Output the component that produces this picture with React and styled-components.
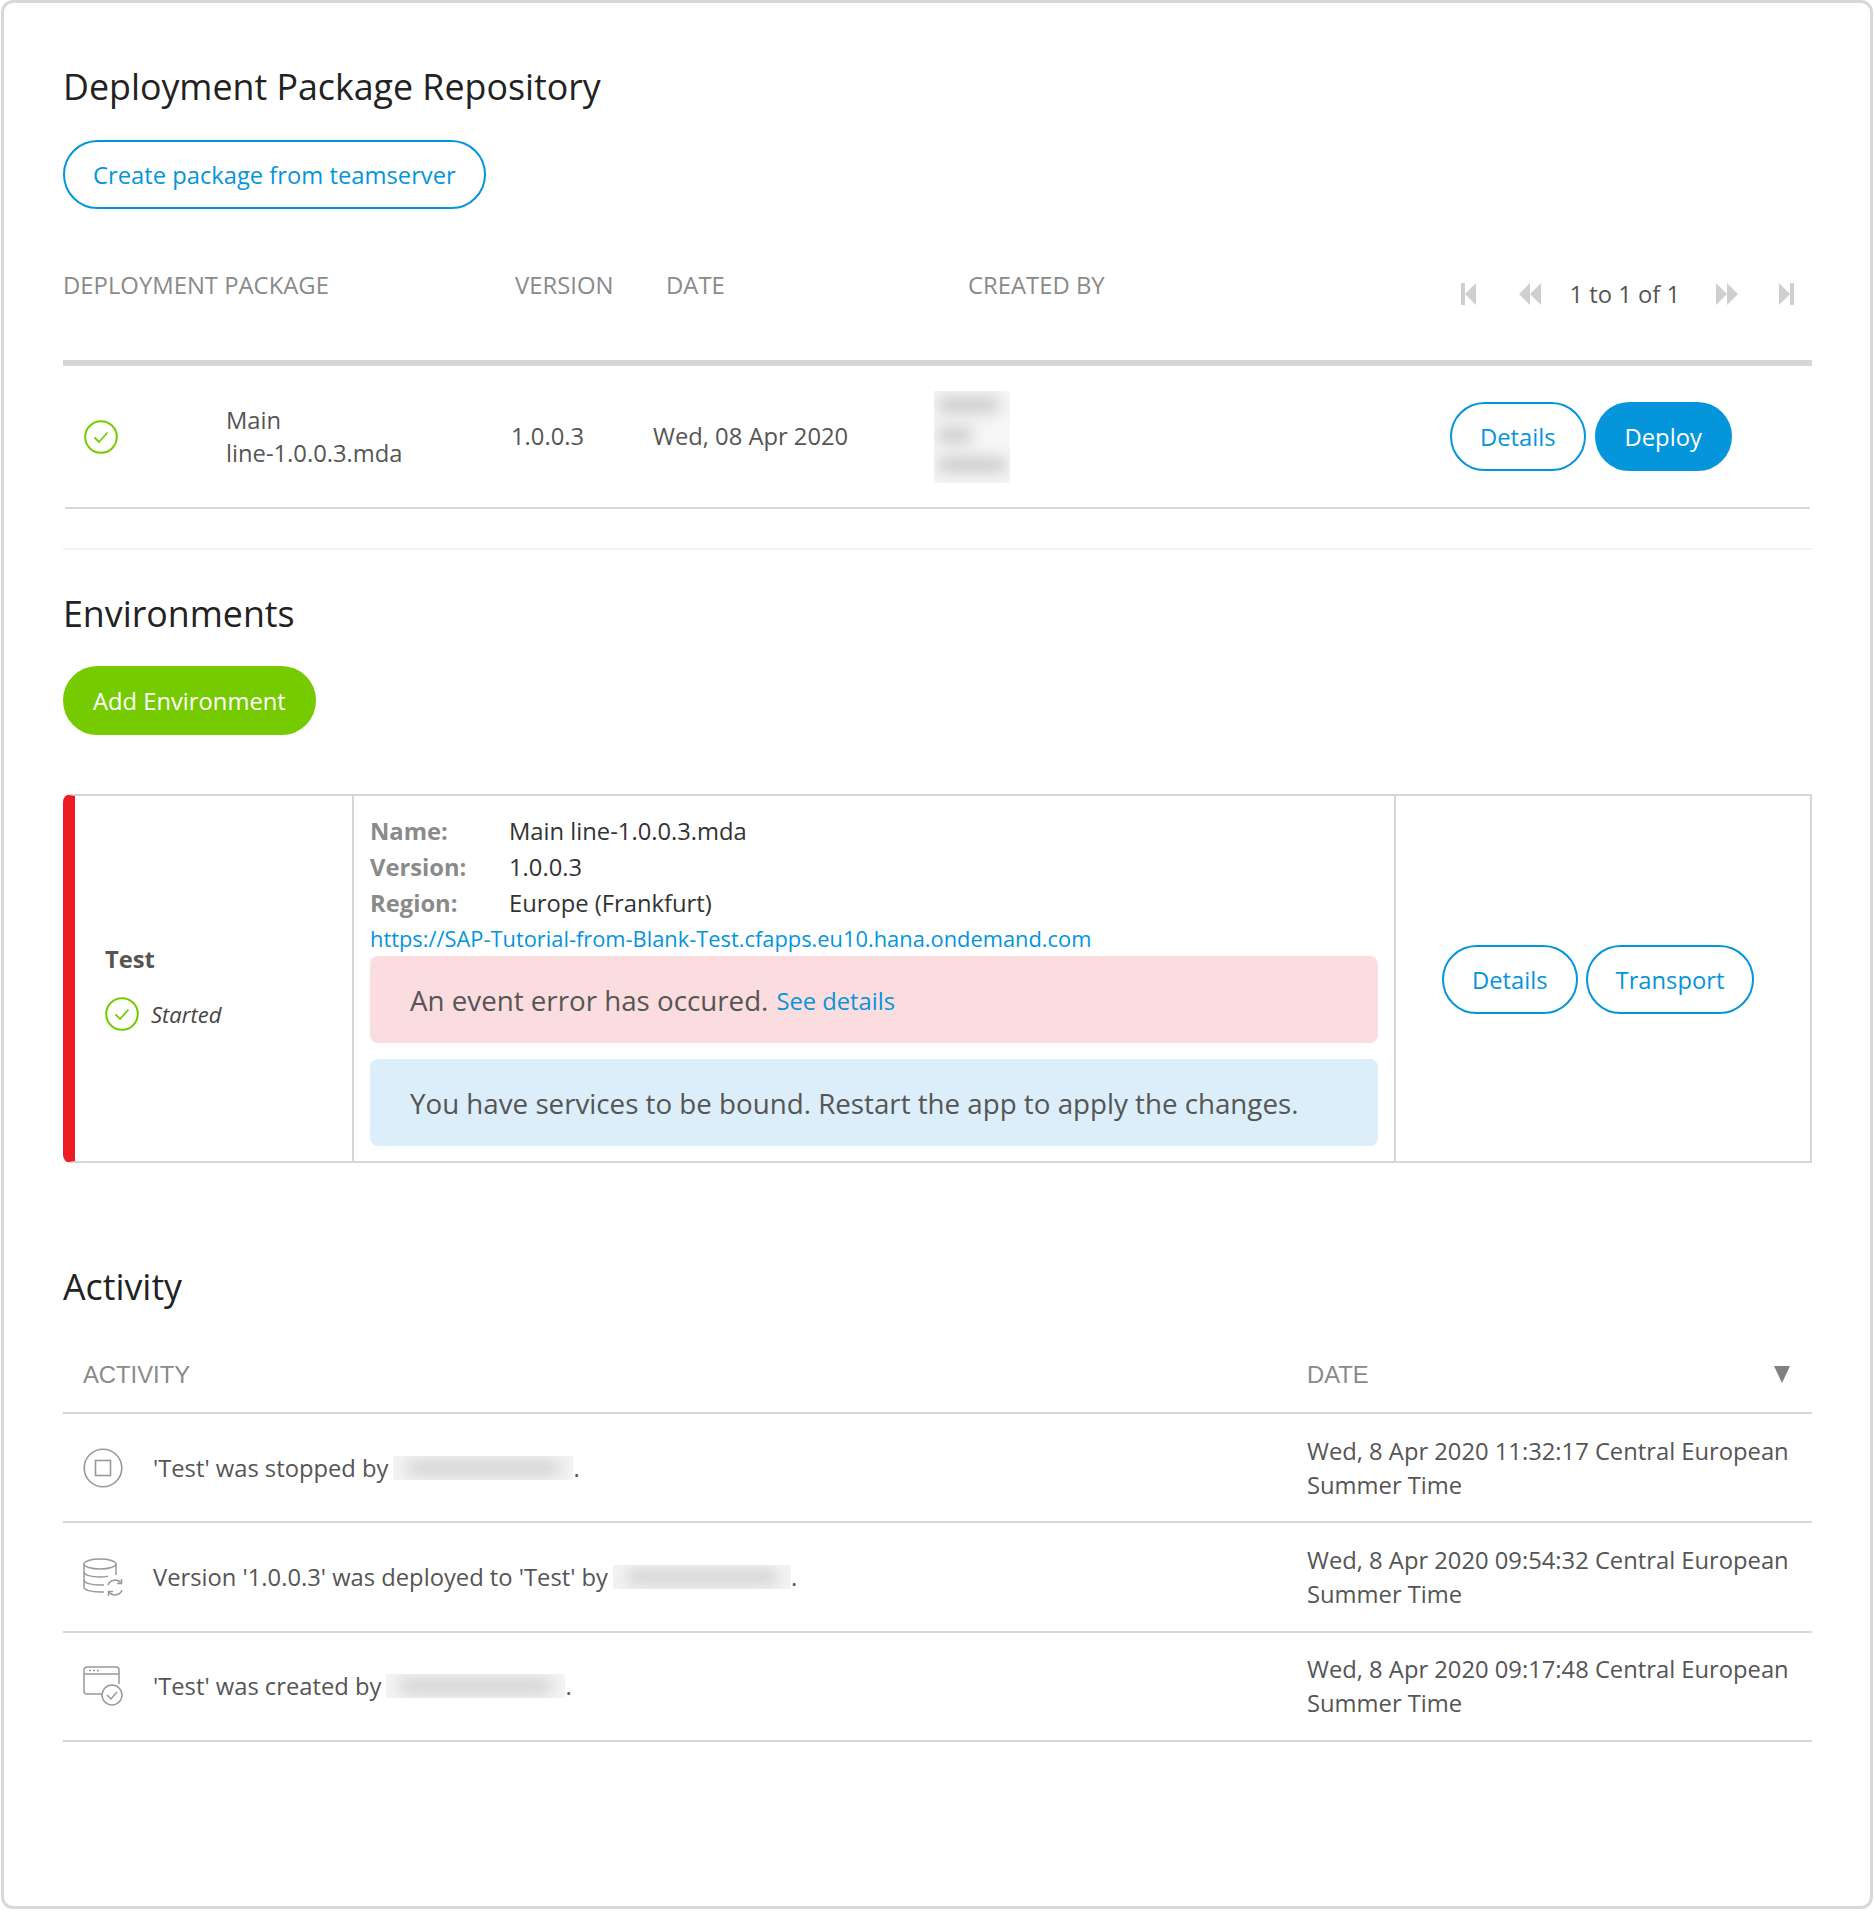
import React from 'react';
import styled, { createGlobalStyle } from 'styled-components';

const GlobalStyle = createGlobalStyle`
  html, body {
    margin: 0;
    padding: 0;
    background: #fff;
  }
  * { box-sizing: border-box; }
  body {
    font-family: "Open Sans", sans-serif;
    color: #555;
  }
`;

const Frame = styled.div`
  width: 1872px;
  height: 1909px;
  margin: 0 0 0 1px;
  border: 3px solid #d8d8d8;
  border-radius: 12px;
  padding: 0 58px 0 59px;
  background: #fff;
`;

const Heading = styled.h2`
  margin: 0;
  font-size: 35.75px;
  line-height: 48px;
  font-weight: 400;
  color: #222;
`;

const PageHeading = styled(Heading)`
  padding-top: 59px;
`;

const Pill = styled.button`
  height: 69px;
  padding: 0 28px;
  border-radius: 35px;
  border: 2px solid ${({ $fill }) => $fill || '#0595db'};
  background: ${({ $fill }) => $fill || '#fff'};
  color: ${({ $fill }) => ($fill ? '#fff' : '#0595db')};
  font: 400 23.75px "Open Sans", sans-serif;
  white-space: nowrap;
`;

const TopAction = styled.div`
  margin-top: ${({ $mt }) => $mt}px;
`;

const PackageHead = styled.div`
  display: grid;
  grid-template-columns: 452px 151px 302px 200px 1fr;
  height: 157px;
  padding-top: 60px;
  border-bottom: 6px solid #d6d6d6;
`;

const HeadCell = styled.div`
  font-size: 23.85px;
  line-height: 33px;
  color: #8a8a8a;
`;

const Pager = styled.div`
  display: flex;
  align-items: center;
  justify-content: flex-end;
  height: 33px;
  margin-top: 8px;
  padding-right: 18px;
  font-size: 23.75px;
  color: #555;
`;

const PagerIcon = styled.svg`
  display: block;
  margin: ${({ $m }) => $m};
  fill: #cfcfcf;
`;

const PackageRow = styled.div`
  display: grid;
  grid-template-columns: 161px 285px 142px 281px 516px 1fr;
  align-items: center;
  height: 143px;
  margin: 0 2px;
  border-bottom: 2px solid #d8d8d8;
  font-size: 23.75px;
  line-height: 33px;
`;

const CheckCell = styled.div`
  padding-left: 19px;
`;

const Blur = styled.div`
  width: ${({ $w }) => $w}px;
  height: ${({ $h }) => $h}px;
  overflow: hidden;
  background: #f7f7f7;
`;

const BlurBar = styled.div`
  height: 14px;
  width: ${({ $w }) => $w}%;
  margin: ${({ $m }) => $m};
  background: #c4c4c4;
  filter: blur(8px);
`;

const BlurInline = styled(Blur)`
  flex: none;
  margin-left: 5px;
  background: #f4f4f4;
`;

const InlineBar = styled.div`
  height: 12px;
  margin: 6px 14px;
  background: #c8c8c8;
  filter: blur(8px);
`;

const Actions = styled.div`
  display: flex;
  gap: ${({ $gap }) => $gap}px;
`;

const SoftRule = styled.div`
  height: 2px;
  margin-top: 39px;
  background: #f1f1f1;
`;

const SectionHeading = styled(Heading)`
  margin-top: ${({ $mt }) => $mt}px;
`;

const EnvCard = styled.div`
  display: grid;
  grid-template-columns: 279px 1042px 1fr;
  height: 369px;
  margin-top: 59px;
  border: 2px solid #d6d6d6;
  border-left: 12px solid #ed1c24;
  border-radius: 8px 0 0 8px;
`;

const EnvName = styled.div`
  display: flex;
  flex-direction: column;
  justify-content: center;
  gap: 21px;
  padding: 16px 0 0 30px;
  border-right: 2px solid #d6d6d6;
`;

const EnvTitle = styled.div`
  font-size: 23.75px;
  line-height: 33px;
  font-weight: 700;
  color: #555;
`;

const EnvStatus = styled.div`
  display: flex;
  align-items: center;
  gap: 12px;
  font-size: 22px;
  font-style: italic;
  color: #444;
`;

const EnvInfo = styled.div`
  padding: 17px 16px 0;
  border-right: 2px solid #d6d6d6;
`;

const InfoRow = styled.div`
  display: flex;
  height: 36px;
  font-size: 23.75px;
  line-height: 36px;
  color: #333;
`;

const InfoLabel = styled.div`
  width: 139px;
  font-weight: 700;
  color: #8a8a8a;
`;

const Link = styled.a`
  color: #0595db;
  text-decoration: none;
`;

const SmallLink = styled(Link)`
  font-size: 23.75px;
  padding-top: 2px;
`;

const UrlRow = styled.div`
  height: 35px;
  font-size: 21.85px;
  line-height: 36px;
`;

const Alert = styled.div`
  display: flex;
  align-items: center;
  gap: 8px;
  height: 87px;
  margin-top: ${({ $mt }) => $mt}px;
  padding-left: 40px;
  border-radius: 8px;
  background: ${({ $bg }) => $bg};
  font-size: 27.73px;
  color: #555;
`;

const EnvActions = styled(Actions)`
  align-items: center;
  padding: 2px 0 0 46px;
`;

const ActivityHead = styled.div`
  display: grid;
  grid-template-columns: 1243px 1fr;
  align-items: center;
  height: 77px;
  margin-top: 27px;
  border-bottom: 2px solid #d8d8d8;
  font-family: "Liberation Sans", Arial, sans-serif;
  font-size: 23.8px;
  color: #8a8a8a;
`;

const HeadLabel = styled.div`
  padding-left: 20px;
`;

const DateHead = styled.div`
  display: flex;
  align-items: center;
  justify-content: space-between;
  padding: 0 22px 0 1px;
`;

const SortArrow = styled.div`
  width: 0;
  height: 0;
  border-left: 8px solid transparent;
  border-right: 8px solid transparent;
  border-top: 17px solid #808080;
`;

const ActivityRow = styled.div`
  display: grid;
  grid-template-columns: 1244px 1fr;
  align-items: center;
  height: 109.3px;
  border-bottom: 2px solid #d8d8d8;
  font-size: 23.75px;
  line-height: 34px;
`;

const ActivityText = styled.div`
  display: flex;
  align-items: center;
  padding-left: 20px;
`;

const IconSlot = styled.div`
  width: 70px;
  flex: none;
`;

const Msg = styled.div`
  white-space: nowrap;
`;

const CheckIcon = ({ size = 34 }) => (
  <svg width={size} height={size} viewBox="0 0 34 34" fill="none" style={{ display: 'block' }}>
    <circle cx="17" cy="17" r="15.8" stroke="#76cb00" strokeWidth="2" />
    <path d="M10.5 17.5l4.5 4.5 8.5-9.5" stroke="#76cb00" strokeWidth="1.8" />
  </svg>
);

const StopIcon = () => (
  <svg width="40" height="40" viewBox="0 0 40 40" fill="none" style={{ display: 'block' }}>
    <circle cx="20" cy="20" r="18.8" stroke="#999" strokeWidth="1.6" />
    <rect x="12.5" y="12.5" width="15" height="15" stroke="#999" strokeWidth="1.6" />
  </svg>
);

const DatabaseIcon = () => (
  <svg width="40" height="40" viewBox="0 0 40 40" fill="none" stroke="#999" strokeWidth="1.5" style={{ display: 'block' }}>
    <ellipse cx="17" cy="7" rx="16" ry="5" />
    <path d="M1 7v23c0 3 7 5 16 5h4" />
    <path d="M33 7v11" />
    <path d="M1 15c0 3 7 5 16 5 3 0 6-.3 8-.9" />
    <path d="M1 23c0 3 7 5 16 5h4" />
    <path d="M25 28a7.5 7.5 0 0 1 13-2" />
    <path d="M38.5 22v4.5h-4.5" />
    <path d="M39 33a7.5 7.5 0 0 1-13 2" />
    <path d="M25.5 39v-4.5h4.5" />
  </svg>
);

const WindowCheckIcon = () => (
  <svg width="40" height="40" viewBox="0 0 40 40" fill="none" stroke="#999" strokeWidth="1.5" style={{ display: 'block' }}>
    <path d="M19 28H4a3 3 0 0 1-3-3V4a3 3 0 0 1 3-3h29a3 3 0 0 1 3 3v14" />
    <path d="M1 8h35" />
    <path d="M6 4.5h2M10 4.5h2M14 4.5h2" />
    <circle cx="29" cy="29" r="10" />
    <path d="M24 29l4 4 6-7" />
  </svg>
);

const Icon = ({ d, w, m }) => (
  <PagerIcon width={w} height="22" viewBox={`0 0 ${w} 22`} $m={m}>
    <path d={d} />
  </PagerIcon>
);

export default function App() {
  return (
    <>
      <GlobalStyle />
      <Frame>
        <PageHeading>Deployment Package Repository</PageHeading>
        <TopAction $mt={30}>
          <Pill>Create package from teamserver</Pill>
        </TopAction>

        <PackageHead>
          <HeadCell>DEPLOYMENT PACKAGE</HeadCell>
          <HeadCell>VERSION</HeadCell>
          <HeadCell>DATE</HeadCell>
          <HeadCell>CREATED BY</HeadCell>
          <Pager>
            <Icon w={15} d="M0 0h4v22H0zM15 0v22L4 11z" m="0 43px 0 0" />
            <Icon w={22} d="M11 0v22L0 11zM22 0v22L11 11z" m="0 29px 0 0" />
            <span>1 to 1 of 1</span>
            <Icon w={22} d="M0 0v22l11-11zM11 0v22l11-11z" m="0 0 0 36px" />
            <Icon w={15} d="M0 0v22l11-11zM11 0h4v22h-4z" m="0 0 0 41px" />
          </Pager>
        </PackageHead>

        <PackageRow>
          <CheckCell>
            <CheckIcon />
          </CheckCell>
          <div>
            Main
            <br />
            line-1.0.0.3.mda
          </div>
          <div>1.0.0.3</div>
          <div>Wed, 08 Apr 2020</div>
          <Blur $w={76} $h={92}>
            <BlurBar $w={80} $m="7px 4px 0" />
            <BlurBar $w={45} $m="16px 4px 0" />
            <BlurBar $w={90} $m="16px 4px 0" />
          </Blur>
          <Actions $gap={9}>
            <Pill>Details</Pill>
            <Pill $fill="#0595db">Deploy</Pill>
          </Actions>
        </PackageRow>

        <SoftRule />

        <SectionHeading $mt={39}>Environments</SectionHeading>
        <TopAction $mt={29}>
          <Pill $fill="#76cb00">Add Environment</Pill>
        </TopAction>

        <EnvCard>
          <EnvName>
            <EnvTitle>Test</EnvTitle>
            <EnvStatus>
              <CheckIcon />
              Started
            </EnvStatus>
          </EnvName>
          <EnvInfo>
            <InfoRow>
              <InfoLabel>Name:</InfoLabel>Main line-1.0.0.3.mda
            </InfoRow>
            <InfoRow>
              <InfoLabel>Version:</InfoLabel>1.0.0.3
            </InfoRow>
            <InfoRow>
              <InfoLabel>Region:</InfoLabel>Europe (Frankfurt)
            </InfoRow>
            <UrlRow>
              <Link href="#">https://SAP-Tutorial-from-Blank-Test.cfapps.eu10.hana.ondemand.com</Link>
            </UrlRow>
            <Alert $bg="#fbdcdf" $mt={0}>
              An event error has occured.
              <SmallLink href="#">See details</SmallLink>
            </Alert>
            <Alert $bg="#dbeefa" $mt={16}>
              You have services to be bound. Restart the app to apply the changes.
            </Alert>
          </EnvInfo>
          <EnvActions $gap={8}>
            <Pill>Details</Pill>
            <Pill>Transport</Pill>
          </EnvActions>
        </EnvCard>

        <SectionHeading $mt={99}>Activity</SectionHeading>
        <ActivityHead>
          <HeadLabel>ACTIVITY</HeadLabel>
          <DateHead>
            DATE
            <SortArrow />
          </DateHead>
        </ActivityHead>

        <ActivityRow>
          <ActivityText>
            <IconSlot><StopIcon /></IconSlot>
            <Msg>'Test' was stopped by</Msg>
            <BlurInline $w={180} $h={24}><InlineBar /></BlurInline>
            <Msg>.</Msg>
          </ActivityText>
          <div>
            Wed, 8 Apr 2020 11:32:17 Central European
            <br />
            Summer Time
          </div>
        </ActivityRow>
        <ActivityRow>
          <ActivityText>
            <IconSlot><DatabaseIcon /></IconSlot>
            <Msg>Version '1.0.0.3' was deployed to 'Test' by</Msg>
            <BlurInline $w={178} $h={24}><InlineBar /></BlurInline>
            <Msg>.</Msg>
          </ActivityText>
          <div>
            Wed, 8 Apr 2020 09:54:32 Central European
            <br />
            Summer Time
          </div>
        </ActivityRow>
        <ActivityRow>
          <ActivityText>
            <IconSlot><WindowCheckIcon /></IconSlot>
            <Msg>'Test' was created by</Msg>
            <BlurInline $w={179} $h={24}><InlineBar /></BlurInline>
            <Msg>.</Msg>
          </ActivityText>
          <div>
            Wed, 8 Apr 2020 09:17:48 Central European
            <br />
            Summer Time
          </div>
        </ActivityRow>
      </Frame>
    </>
  );
}
